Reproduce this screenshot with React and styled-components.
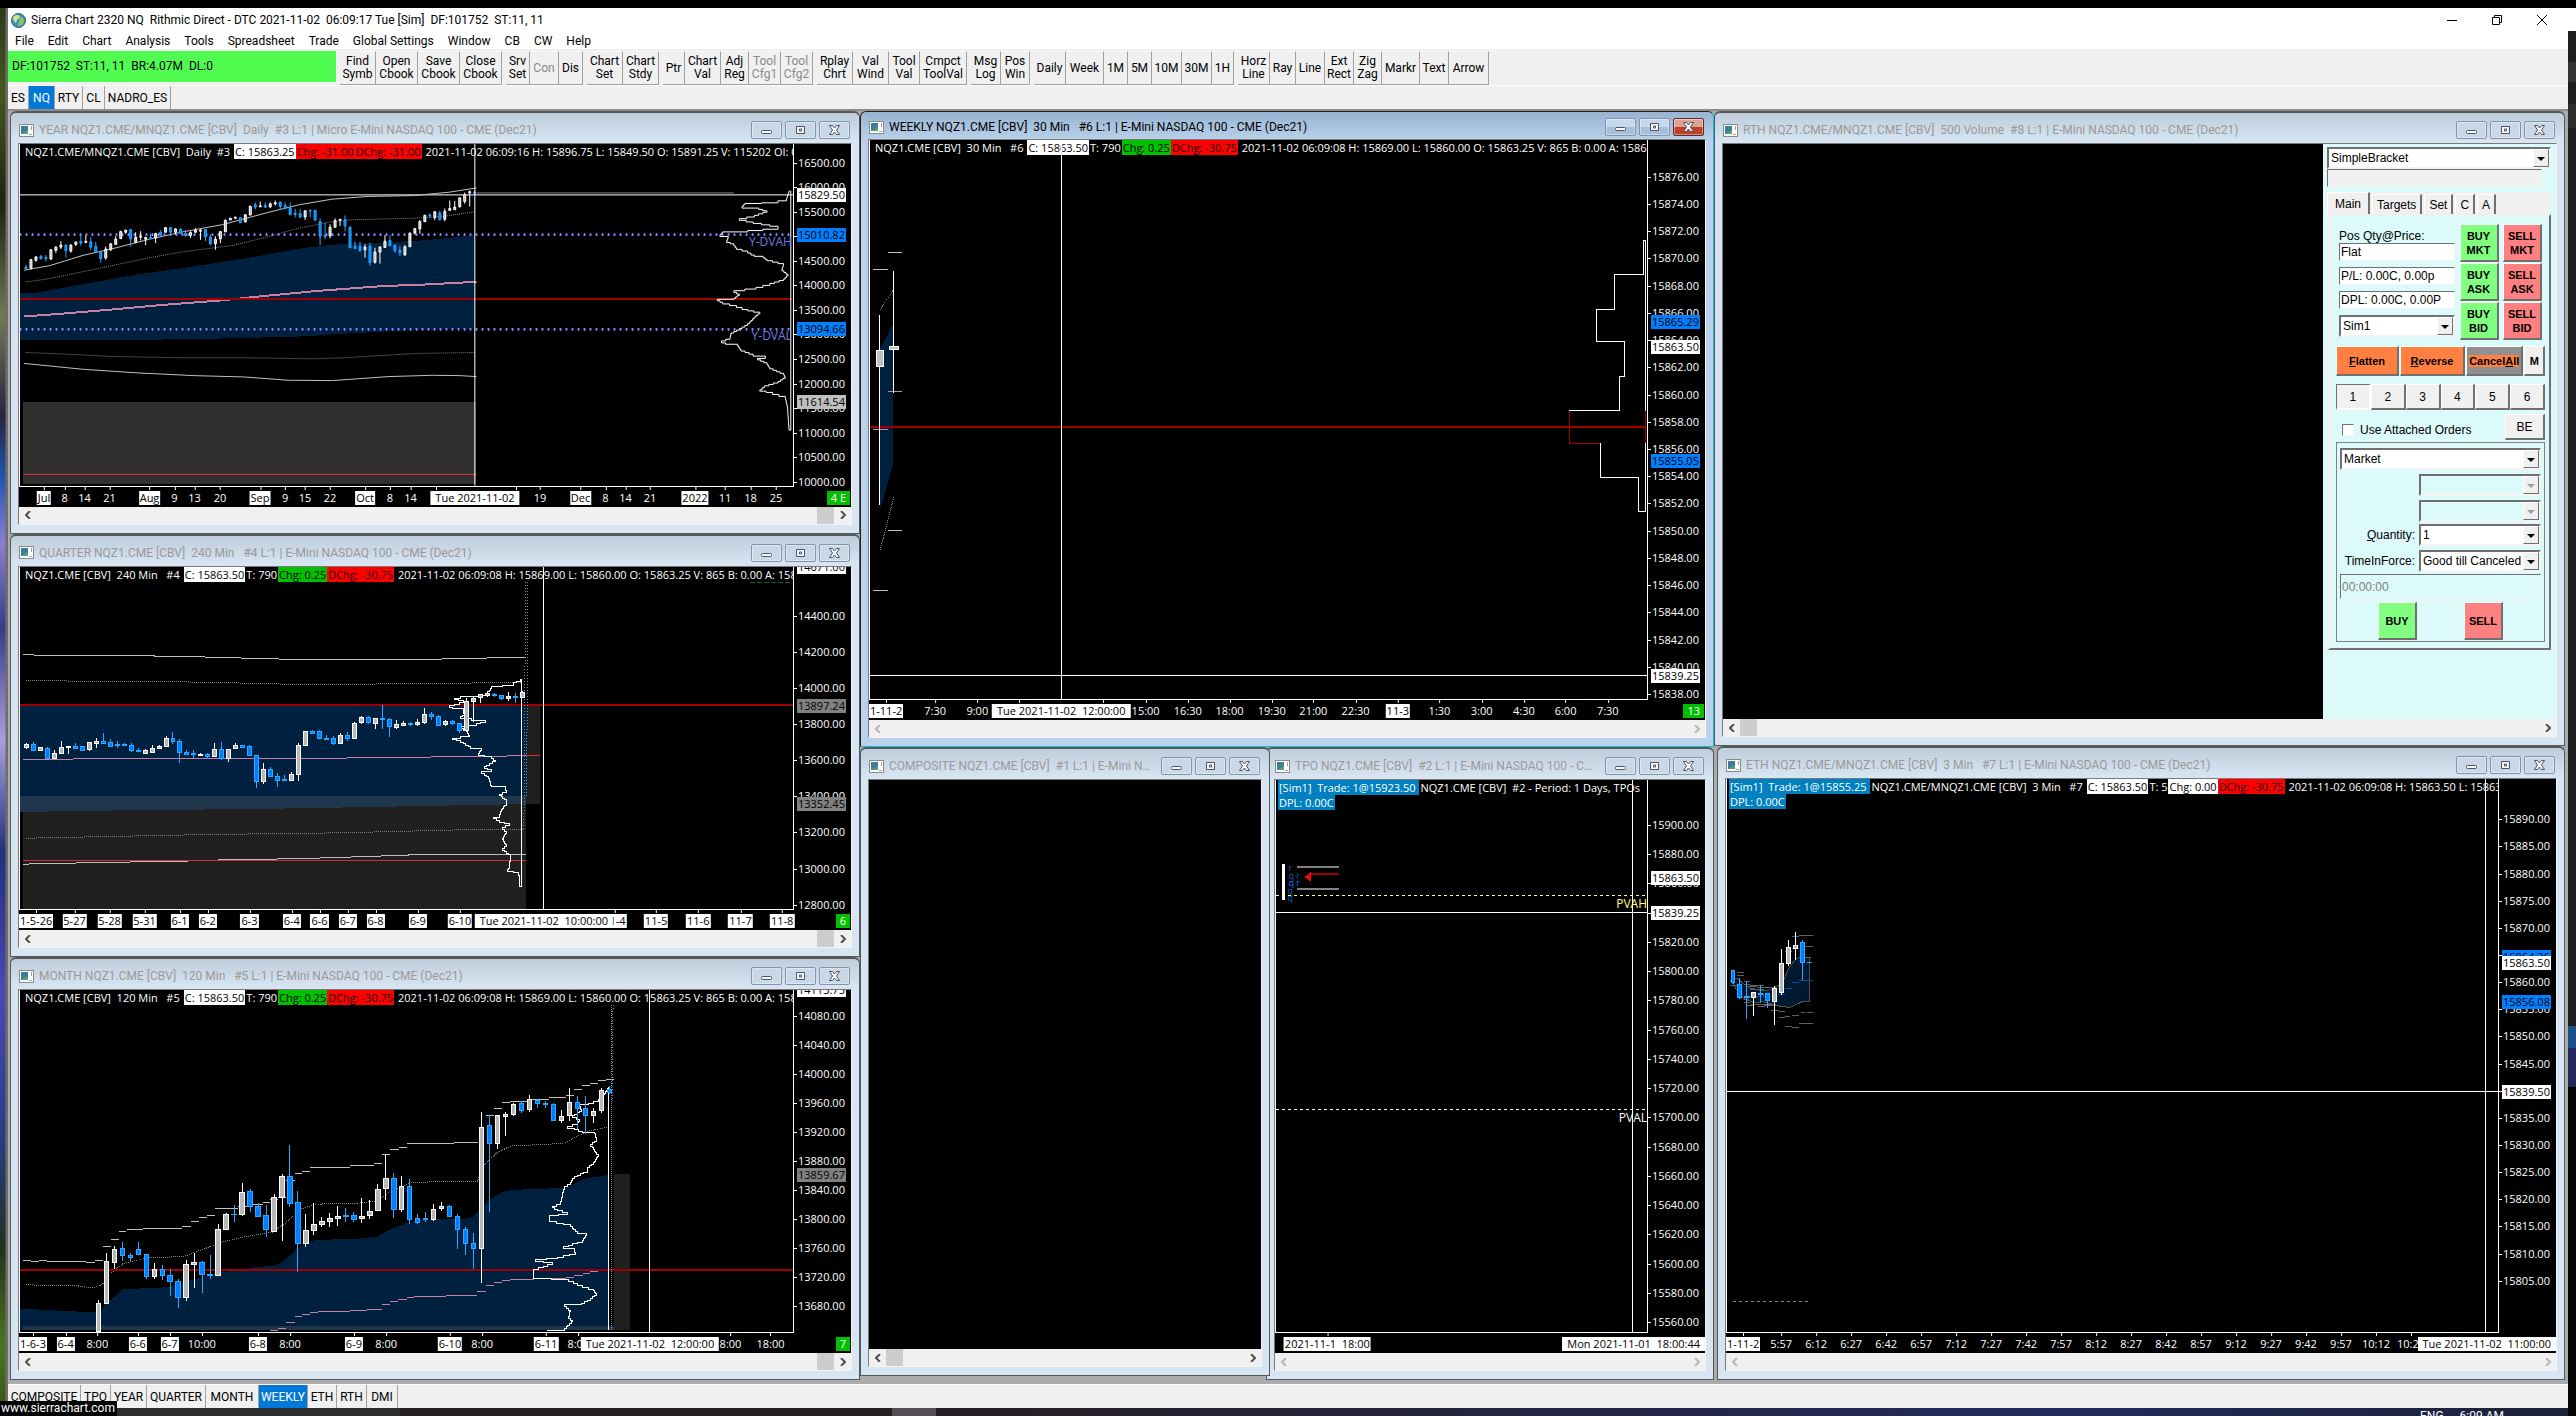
import React from 'react';
import styled, { createGlobalStyle, css } from 'styled-components';

const uiFont = `Roboto, "Open Sans", sans-serif`;
const chartFont = `"Open Sans", "Noto Sans", sans-serif`;
const panelFont = `"Liberation Sans", Arial, sans-serif`;

const GlobalStyle = createGlobalStyle`
    * { box-sizing: border-box; }
    body { margin: 0; background: #000; font-family: ${uiFont}; font-size: 12px; }
    button, input, select { font: inherit; color: inherit; margin: 0; border-radius: 0; }
`;

/* ---------- desktop and application shell ---------- */

const Desktop = styled.div`
    height: 100vh;
    min-height: 900px;
    display: grid;
    grid-template-columns: 8px minmax(0, 1fr) 8px;
    grid-template-rows: 8px minmax(0, 1fr) 8px;
    background: #000;
    line-height: 16px;
    color: #000;
    overflow: hidden;
`;

const Wallpaper = styled.div`
    grid-column: 1;
    grid-row: 2 / 4;
    background: linear-gradient(90deg, transparent 5px, #6d6d6d 6px),
        linear-gradient(#2c3a18 0, #46581e 6%, #1c2410 14%, #6f7a55 22%, #2a2340 29%, #1d52a8 33%, #8a7fd0 38%, #3a3a8c 44%, #a9a0dc 52%, #23307c 60%, #4a4ab4 70%, #2b3c86 80%, #1f3320 88%, #4d7420 95%, #33521a 100%);
`;

const SideApp = styled.div`
    grid-column: 3;
    grid-row: 2 / 4;
    background: linear-gradient(#fff 0 23px, #1e1e1e 23px 54px, #333 54px 74px, #1e1e1e 74px 96px, #2c2c2c 96px 120px, #1e1e1e 120px 1018px, #20508a 1018px 1040px, #26265c 1040px 1079px, #050505 1079px);
`;

const Taskbar = styled.div`
    grid-column: 2;
    grid-row: 3;
    display: flex;
    justify-content: flex-end;
    gap: 16px;
    padding-right: 64px;
    overflow: hidden;
    background: linear-gradient(90deg, #2d2d2d 0 392px, #261f24 392px 884px, #544f54 884px 928px, #261f24 928px, #222a5c 80%, #1c2238);
    color: #fff;
`;

const StatusTip = styled.div`
    position: fixed;
    left: 0;
    bottom: 0;
    height: 15px;
    padding: 0 2px 0 1px;
    background: #000;
    color: #fff;
    line-height: 14px;
`;

const Application = styled.div`
    grid-column: 2;
    grid-row: 2;
    display: flex;
    flex-direction: column;
    background: #f0f0f0;
`;

const AppTitle = styled.header`
    display: flex;
    align-items: center;
    gap: 5px;
    height: 24px;
    padding: 0 16px 0 3px;
    background: #fff;
    white-space: pre;
`;

const AppName = styled.h1`
    flex: 1;
    margin: 0;
    font-size: 12px;
    font-weight: 400;
`;

const AppControls = styled.div`
    display: flex;
    gap: 25px;
`;

const PlainButton = styled.button`
    display: flex;
    align-items: center;
    justify-content: center;
    padding: 0;
    border: 0;
    background: none;
`;

const MenuBar = styled.nav`
    display: flex;
    gap: 14px;
    height: 17px;
    padding-left: 7px;
    background: #fff;
`;

const Toolbar = styled.div`
    display: flex;
    gap: 4px;
    height: 36px;
    padding-top: 2px;
`;

const Connection = styled.div`
    width: 328px;
    height: 31px;
    padding-left: 4px;
    background: #50fc50;
    line-height: 31px;
    white-space: pre;
`;

const ToolGroup = styled.div`
    display: flex;
`;

const ToolButton = styled.button`
    width: ${p => p.$w}px;
    height: 34px;
    padding: 0;
    border: solid;
    border-width: 1px 1px 1px 0;
    border-color: #a0a0a0;
    border-top-color: #f8f8f8;
    background: #f0f0f0;
    line-height: 13px;
    white-space: pre-line;
    color: ${p => (p.disabled ? '#8a8a8a' : '#000')};
`;

const TabStrip = styled.div`
    display: flex;
    height: 24px;
    border-top: 1px solid #fff;
`;

const StripTab = styled.button`
    width: ${p => p.$w}px;
    padding: 0;
    border: 0;
    border-right: 1px solid #a0a0a0;
    background: ${p => (p.$on ? '#0078d7' : '#f0f0f0')};
    color: ${p => (p.$on ? '#fff' : '#000')};
    white-space: nowrap;
`;

const Workspace = styled.main`
    flex: 1;
    min-height: 0;
    display: grid;
    grid-template-columns: minmax(0, 850fr) minmax(0, 854fr) minmax(0, 851fr);
    padding: 0 3px 4px 2px;
    border-top: 2px solid #8c8c8c;
    background: #ababab;
`;

const Column = styled.div`
    display: grid;
    grid-template-rows: ${p => p.$rows};
    min-height: 0;
`;

const Split = styled.div`
    display: grid;
    grid-template-columns: minmax(0, 410fr) minmax(0, 444fr);
    min-height: 0;
`;

/* ---------- chart windows ---------- */

const Frame = styled.section`
    display: flex;
    flex-direction: column;
    min-width: 0;
    min-height: 0;
    padding: 0 7px 8px 7px;
    border: 1px solid #56595c;
    border-top-width: 2px;
    border-radius: 6px 6px 0 0;
    background: linear-gradient(#bfcddb 0, #d7e4f2 28px);
    color: #999;
    ${p => p.$active && css`
        border-color: #222;
        border-top-width: 1px;
        border-right-color: #18b8d8;
        border-bottom-color: #18b8d8;
        background: linear-gradient(#98b4d2 0, #b9d1ea 28px);
        color: #000;
    `}
    ${p => p.$place === 'short' && css`margin-bottom: 4px; position: relative; z-index: 1;`}
    ${p => p.$place === 'under' && css`margin-left: -4px;`}
    ${p => p.$place === 'inset' && css`margin-left: 3px;`}
`;

const TitleBar = styled.div`
    flex: none;
    display: flex;
    align-items: center;
    gap: 5px;
    height: ${p => (p.$active ? 27 : 30)}px;
    padding: ${p => (p.$active ? 3 : 4)}px 2px 0 1px;
`;

const Title = styled.h2`
    flex: 1;
    min-width: 0;
    margin: 0;
    overflow: hidden;
    text-overflow: ellipsis;
    white-space: pre;
    font-size: 12px;
    font-weight: 400;
`;

const Caption = styled.div`
    display: flex;
    gap: 3px;
`;

const CaptionButton = styled.button`
    display: flex;
    align-items: center;
    justify-content: center;
    width: 31px;
    height: 18px;
    padding: 0;
    border: 1px solid #8393ac;
    border-radius: 2px;
    background: ${p => (p.$active ? 'linear-gradient(#c6d8ec 50%, #a6c0dc 50%)' : '#c9d7e6')};
    box-shadow: inset 0 0 0 1px rgba(255, 255, 255, 0.4);
    ${p => p.$close && css`
        border-color: #5c2a2a;
        background: linear-gradient(#e0a393 50%, #bd4029 50%);
    `}
`;

const Client = styled.div`
    flex: 1;
    min-height: 0;
    display: flex;
    flex-direction: column;
    border: 1px solid;
    border-color: #7a7a7a #f4f4f4 #f4f4f4 #7a7a7a;
    background: #000;
`;

const ScrollTrack = styled.div`
    flex: none;
    display: flex;
    justify-content: space-between;
    height: 17px;
    background: #f0f0f0;
    color: ${p => (p.$off ? '#b8b8b8' : '#505050')};
`;

const ScrollArrow = styled(PlainButton)`
    width: 17px;
`;

const ScrollThumb = styled.div`
    width: 17px;
    background: #cdcdcd;
    margin-left: ${p => (p.$end ? 'auto' : '0')};
    margin-right: ${p => (p.$end ? '0' : 'auto')};
`;

const ChartGrid = styled.div`
    flex: 1;
    min-height: 0;
    display: grid;
    grid-template-columns: minmax(0, 1fr) 57px;
    grid-template-rows: minmax(0, 1fr) 20px;
    overflow: hidden;
    color: #fff;
    font-family: ${chartFont};
    font-size: 11px;
    line-height: 14px;
    white-space: pre;
`;

const Plot = styled.div`
    position: relative;
    overflow: hidden;
    border: solid #fff;
    border-width: 0 1px 1px 1px;
`;

const PlotDrawing = styled.svg`
    display: block;
    position: absolute;
    inset: 0;
    width: 100%;
    height: 100%;
    fill: none;
    shape-rendering: crispEdges;
    & * { vector-effect: non-scaling-stroke; }
`;

const Readout = styled.div`
    position: absolute;
    top: 0;
    left: ${p => (p.$trade ? 2 : 4)}px;
    right: 0;
    overflow: hidden;
`;

const ReadoutRow = styled.div`
    display: flex;
    height: 15px;
`;

const Cell = styled.span`
    flex: none;
    padding: 0 1px;
    line-height: 15px;
    background: ${p => p.$bg || 'transparent'};
    color: ${p => p.$ink || '#fff'};
    ${p => p.$name && css`padding-right: 4px;`}
`;

const PlotLabel = styled.span`
    position: absolute;
    transform: translate(${p => (p.$right ? '-100%' : '-50%')}, -50%);
    font-size: ${p => (p.$small ? 9 : 12)}px;
    color: ${p => p.$ink};
`;

const PriceAxis = styled.div`
    position: relative;
    overflow: hidden;
`;

const Price = styled.span`
    position: absolute;
    left: 0;
    padding-left: 4px;
    transform: translateY(-50%);
    &::before {
        content: '';
        position: absolute;
        left: 0;
        top: 7px;
        width: 3px;
        height: 1px;
        background: #fff;
    }
`;

const PriceBadge = styled.span`
    position: absolute;
    left: 3px;
    padding: 0 1px;
    transform: translateY(-50%);
    background: ${p => p.$bg};
    color: #000;
`;

const TimeAxis = styled.div`
    grid-column: 1 / -1;
    position: relative;
    overflow: hidden;
`;

const Time = styled.span`
    position: absolute;
    top: 4px;
    padding: 0 1px;
    transform: translateX(-50%);
    ${p => p.$boxed && css`background: #fff; color: #000;`}
    ${p => !p.$wide && css`
        &::before {
            content: '';
            position: absolute;
            left: 50%;
            top: -4px;
            width: 1px;
            height: 3px;
            background: #fff;
        }
    `}
    ${p => p.$wide && css`padding: 0 5px;`}
    ${p => p.$flush && css`left: 0; transform: none;`}
    ${p => p.$end && css`left: auto; right: 0; transform: none;`}
`;

const Corner = styled.span`
    position: absolute;
    top: 4px;
    right: 1px;
    padding: 0 4px;
    background: #00c000;
    color: #fff;
`;

const WindowIcon = () => (
    <svg width="15" height="13" viewBox="0 0 15 13">
        <rect x="0.5" y="0.5" width="14" height="12" fill="#fff" stroke="#8a8a8a" />
        <rect x="2" y="2" width="7" height="8" fill="#3d7f9a" />
        <path d="M2 10L9 6V10Z" fill="#5aa06a" />
        <path d="M12.5 2V6M10 10.5H13" stroke="#a0a0a0" />
    </svg>
);

const glyphs = {
    Minimize: <rect x="1.5" y="6.5" width="10" height="3" rx="1" />,
    Restore: <path d="M2.5 2.5H10.5V9.5H2.5ZM5.5 5H7.5V7H5.5Z" />,
    Close: <path d="M1.5 1.5H4.5L6.5 4L8.5 1.5H11.5L8.5 6L11.5 10.5H8.5L6.5 8L4.5 10.5H1.5L4.5 6Z" />,
};

function ChildWindow({ title, active, place, children }) {
    return (
        <Frame $active={active} $place={place} aria-label={title}>
            <TitleBar $active={active}>
                <WindowIcon />
                <Title>{title}</Title>
                <Caption>
                    {Object.keys(glyphs).map(name => (
                        <CaptionButton key={name} aria-label={name} $active={active} $close={active && name === 'Close'}>
                            <svg width="13" height="12" viewBox="0 0 13 12" fill="#f6f8fa" stroke="#4c5566" strokeWidth="1">
                                {glyphs[name]}
                            </svg>
                        </CaptionButton>
                    ))}
                </Caption>
            </TitleBar>
            <Client>{children}</Client>
        </Frame>
    );
}

function Scrollbar({ thumb }) {
    return (
        <ScrollTrack $off={!thumb}>
            <ScrollArrow aria-label="Scroll left">
                <svg width="6" height="8" fill="none" stroke="currentColor" strokeWidth="2"><path d="M5 0L1 4L5 8" /></svg>
            </ScrollArrow>
            {thumb && <ScrollThumb $end={thumb === 'end'} />}
            <ScrollArrow aria-label="Scroll right">
                <svg width="6" height="8" fill="none" stroke="currentColor" strokeWidth="2"><path d="M1 0L5 4L1 8" /></svg>
            </ScrollArrow>
        </ScrollTrack>
    );
}

// box: [left, plot right, axis right, top, bottom] in drawing units
function Chart({ box, readout, trade, prices, badges = [], times, corner, labels = [], thumb, children }) {
    const [x0, x1, xEnd, y0, y1] = box;
    const px = x => `${((x - x0) / (x1 - x0)) * 100}%`;
    const py = y => `${((y - y0) / (y1 - y0)) * 100}%`;
    const tx = x => `${((x - x0) / (xEnd - x0)) * 100}%`;
    const { from, step, count, at, gap } = prices;
    const scale = Array.from({ length: count }, (_, i) => ({ v: from - i * step, y: at + i * gap }));

    return (
        <>
            <ChartGrid>
                <Plot>
                    <Readout $trade={trade}>
                        <ReadoutRow>
                            {trade && <Cell $bg="#0080c0">{trade}</Cell>}
                            {readout.map(([text, bg, ink], i) => <Cell key={text} $name={i === 0} $bg={bg} $ink={ink}>{text}</Cell>)}
                        </ReadoutRow>
                        {trade && <ReadoutRow><Cell $bg="#0080c0">DPL: 0.00C</Cell></ReadoutRow>}
                    </Readout>
                    <PlotDrawing viewBox={`${x0} ${y0} ${x1 - x0} ${y1 - y0}`} preserveAspectRatio="none">{children}</PlotDrawing>
                    {labels.map((l, i) => (
                        <PlotLabel key={i} $ink={l.ink} $right={l.right} $small={l.small} style={{ left: px(l.x), top: py(l.y) }}>{l.text}</PlotLabel>
                    ))}
                </Plot>
                <PriceAxis>
                    {scale.map(s => <Price key={s.v} style={{ top: py(s.y) }}>{s.v.toFixed(2)}</Price>)}
                    {badges.map(([text, y, bg]) => <PriceBadge key={text} $bg={bg} style={{ top: py(y) }}>{text}</PriceBadge>)}
                </PriceAxis>
                <TimeAxis>
                    {times.map(([text, x, kind]) => (
                        <Time
                            key={text + x}
                            $boxed={!!kind}
                            $wide={kind === 'cursor' || kind === 'cursorEnd'}
                            $flush={kind === 'first'}
                            $end={kind === 'cursorEnd'}
                            style={kind === 'first' || kind === 'cursorEnd' ? undefined : { left: tx(x) }}
                        >
                            {text}
                        </Time>
                    ))}
                    {corner && <Corner>{corner}</Corner>}
                </TimeAxis>
            </ChartGrid>
            <Scrollbar thumb={thumb} />
        </>
    );
}

// bars: [high, low, bodyTop, bodyBottom, up]
function Candles({ bars, x, step, half, dy = 0 }) {
    return bars.map(([high, low, top, bottom, up], i) => {
        const cx = x + i * step;
        return (
            <g key={i} stroke={up ? '#fff' : '#28a8ff'}>
                <path d={`M${cx} ${high + dy}V${low + dy}`} />
                <rect x={cx - half} y={top + dy} width={half * 2} height={Math.max(bottom - top, 2)} fill={up ? '#b8b8b8' : '#0080ff'} />
            </g>
        );
    });
}

// ragged volume outline: every leg is broken up in small stairs
const stairs = (points, size = 5) => {
    let d = `M${points[0][0]} ${points[0][1]}`;
    for (let i = 1; i < points.length; i++) {
        const [ax, ay] = points[i - 1];
        const [bx, by] = points[i];
        const n = Math.max(1, Math.round(Math.abs(by - ay) / size));
        for (let k = 1; k <= n; k++) {
            d += `V${ay + ((by - ay) * k) / n}H${ax + ((bx - ax) * k) / n}`;
        }
    }
    return d;
};

const dashes = rows => rows.map(([a, b, y]) => `M${a} ${y}H${b}`).join('');

const quote = name => [
    [name],
    ['C: 15863.50', '#fff', '#000'],
    ['T: 790'],
    ['Chg: 0.25', '#00c000', '#000'],
    ['DChg: -30.75', '#f00', '#200000'],
    [' 2021-11-02 06:09:08 H: 15869.00 L: 15860.00 O: 15863.25 V: 865 B: 0.00 A: 15863.50'],
];

/* ---------- chart data ---------- */

const yearBars = [
    [252, 264, 258, 263, 0], [234, 266, 236, 262, 1], [225, 242, 228, 238, 1], [222, 235, 226, 233, 0], [222, 242, 229, 233, 0],
    [204, 237, 206, 234, 1], [195, 216, 198, 208, 1], [180, 204, 192, 198, 1], [190, 230, 192, 209, 0], [189, 215, 192, 210, 1],
    [181, 195, 183, 190, 1], [162, 194, 181, 186, 0], [163, 186, 181, 184, 1], [168, 207, 182, 198, 0], [183, 215, 196, 214, 0],
    [210, 245, 213, 233, 0], [196, 236, 204, 231, 1], [186, 210, 188, 206, 1], [165, 192, 174, 190, 1], [148, 174, 151, 172, 1],
    [145, 158, 147, 153, 1], [143, 197, 145, 173, 0], [153, 186, 168, 184, 1], [150, 178, 165, 168, 1], [166, 192, 169, 174, 1],
    [156, 174, 169, 172, 0], [155, 186, 157, 170, 1], [147, 165, 153, 162, 0], [139, 155, 139, 153, 1], [139, 160, 139, 153, 0],
    [141, 160, 143, 153, 1], [141, 158, 144, 157, 0], [147, 166, 157, 163, 0], [150, 171, 154, 163, 1], [141, 156, 147, 153, 1],
    [143, 176, 147, 150, 1], [145, 180, 145, 167, 0], [160, 192, 168, 188, 0], [165, 206, 174, 188, 1], [151, 186, 151, 173, 1],
    [114, 152, 117, 152, 1], [109, 116, 111, 116, 1], [105, 112, 108, 111, 1], [109, 124, 109, 124, 0], [100, 122, 100, 122, 1],
    [72, 101, 75, 101, 1], [63, 84, 70, 77, 0], [60, 76, 73, 76, 1], [63, 80, 72, 77, 0], [63, 80, 67, 76, 1],
    [57, 72, 64, 67, 1], [60, 86, 62, 75, 0], [63, 82, 72, 82, 0], [63, 100, 79, 100, 0], [82, 108, 96, 99, 0],
    [84, 110, 97, 107, 0], [88, 116, 88, 107, 1], [84, 108, 87, 89, 0], [85, 120, 87, 116, 0], [111, 192, 121, 165, 0],
    [124, 174, 162, 166, 0], [129, 171, 138, 164, 1], [111, 138, 118, 138, 1], [114, 134, 114, 117, 1], [102, 150, 115, 134, 0],
    [135, 200, 138, 200, 0], [181, 204, 195, 202, 0], [182, 213, 196, 208, 0], [190, 230, 198, 206, 1], [186, 254, 195, 245, 0],
    [200, 248, 213, 244, 1], [195, 248, 198, 213, 1], [162, 199, 180, 199, 1], [163, 194, 178, 194, 0], [190, 216, 192, 209, 0],
    [195, 225, 207, 215, 0], [192, 224, 197, 222, 1], [153, 197, 156, 197, 1], [142, 160, 142, 156, 1], [116, 158, 121, 143, 1],
    [100, 121, 102, 121, 1], [96, 111, 101, 104, 0], [90, 117, 91, 109, 1], [88, 118, 95, 115, 0], [81, 120, 90, 114, 1],
    [57, 87, 81, 87, 1], [58, 85, 77, 85, 1], [49, 78, 49, 76, 1], [33, 67, 40, 60, 1], [27, 75, 30, 34, 1], [27, 38, 31, 35, 0],
];

const yearVolume = [
    [1425, 237], [1420, 262], [1405, 268], [1375, 274], [1345, 276], [1340, 284], [1370, 290], [1385, 298], [1362, 312], [1335, 322],
    [1360, 332], [1405, 345], [1405, 350], [1350, 358], [1305, 362], [1300, 370], [1315, 376], [1312, 390], [1325, 398], [1330, 410],
    [1350, 420], [1362, 432], [1378, 436], [1385, 445], [1415, 458], [1412, 475], [1423, 490], [1415, 505], [1390, 518], [1365, 530],
    [1325, 540], [1335, 550], [1325, 563], [1295, 566], [1305, 575], [1330, 585], [1350, 597], [1372, 605], [1365, 615], [1350, 640],
    [1335, 655], [1320, 668], [1318, 682], [1303, 692], [1310, 698], [1332, 702], [1338, 718], [1360, 732], [1382, 738], [1368, 745],
    [1385, 758], [1390, 772], [1415, 790], [1418, 800], [1405, 815], [1380, 828], [1372, 840], [1395, 848], [1418, 860], [1422, 890],
    [1425, 962], [1428, 962],
];

const quarterBars = [
    [638, 657, 642, 653, 1], [636, 664, 642, 662, 0], [650, 664, 652, 662, 1], [650, 688, 655, 686, 0], [660, 686, 671, 684, 1],
    [634, 673, 651, 671, 1], [649, 672, 649, 652, 1], [640, 656, 649, 654, 0], [648, 660, 650, 660, 0], [636, 662, 638, 658, 1],
    [624, 655, 634, 640, 1], [608, 640, 634, 640, 0], [625, 652, 638, 650, 0], [632, 655, 642, 646, 0], [640, 648, 642, 645, 0],
    [640, 665, 645, 662, 0], [655, 665, 660, 663, 0], [657, 672, 660, 670, 1], [644, 668, 654, 668, 1], [645, 656, 650, 654, 1],
    [618, 650, 624, 650, 1], [606, 642, 626, 634, 0], [628, 700, 633, 668, 0], [660, 675, 668, 672, 0], [660, 685, 670, 674, 0],
    [668, 678, 672, 675, 1], [669, 688, 674, 680, 0], [640, 682, 657, 680, 1], [636, 690, 657, 686, 0], [657, 695, 657, 686, 1],
    [640, 658, 645, 655, 1], [645, 654, 646, 651, 0], [645, 678, 648, 676, 0], [676, 773, 676, 755, 0], [700, 762, 717, 755, 1],
    [710, 740, 717, 738, 0], [730, 770, 738, 751, 0], [735, 754, 748, 752, 0], [727, 753, 733, 751, 1], [640, 752, 647, 733, 1],
    [603, 648, 605, 646, 1], [598, 612, 603, 610, 0], [598, 628, 604, 626, 0], [615, 628, 624, 627, 0], [616, 646, 624, 640, 0],
    [608, 642, 615, 640, 1], [606, 633, 615, 626, 0], [575, 628, 579, 626, 1], [556, 580, 562, 578, 1], [558, 580, 561, 578, 0],
    [563, 595, 565, 580, 1], [525, 597, 565, 569, 0], [562, 620, 567, 590, 0], [570, 595, 584, 593, 1], [572, 588, 580, 586, 1],
    [576, 586, 580, 584, 0], [565, 586, 578, 584, 1], [534, 580, 553, 577, 1], [546, 568, 552, 559, 0], [554, 588, 558, 586, 0],
    [570, 588, 573, 584, 1], [568, 584, 573, 580, 0], [578, 608, 580, 601, 0], [502, 605, 514, 601, 1], [500, 575, 504, 515, 1],
    [490, 517, 494, 503, 1], [486, 500, 490, 495, 1], [488, 500, 492, 497, 0], [495, 508, 497, 506, 0], [484, 512, 499, 506, 1],
    [489, 519, 498, 502, 0], [482, 504, 487, 502, 1],
];

const quarterVolume = [
    [938, 447], [925, 458], [905, 465], [885, 470], [882, 480], [875, 490], [862, 496], [830, 500], [818, 504], [835, 512], [828, 518],
    [810, 526], [815, 532], [835, 534], [836, 550], [830, 560], [850, 566], [875, 572], [858, 580], [830, 590], [840, 600], [845, 615],
    [815, 624], [830, 632], [848, 650], [868, 655], [862, 670], [885, 680], [892, 690], [882, 700], [872, 710], [885, 718], [868, 725],
    [880, 740], [885, 765], [910, 770], [912, 780], [900, 792], [912, 810], [912, 822], [905, 835], [900, 855], [890, 862], [900, 872],
    [918, 882], [905, 893], [912, 905], [905, 925], [912, 945], [905, 957], [920, 975], [918, 1010], [915, 1020], [935, 1028],
    [936, 1070], [941, 1070],
];

const monthBars = [
    [1053, 1150, 1066, 1150, 1], [912, 1066, 939, 1066, 1], [892, 960, 901, 940, 1], [880, 938, 900, 920, 0], [912, 938, 919, 925, 0],
    [880, 918, 903, 917, 0], [915, 990, 918, 984, 0], [942, 990, 963, 985, 1], [950, 995, 961, 982, 0], [962, 1042, 981, 999, 0],
    [990, 1080, 1000, 1048, 0], [935, 1058, 948, 1048, 1], [912, 1018, 942, 948, 1], [938, 1034, 942, 976, 0], [920, 990, 976, 980, 0],
    [826, 982, 842, 980, 1], [792, 844, 795, 842, 1], [768, 820, 795, 797, 0], [702, 800, 730, 796, 1], [718, 788, 728, 773, 0],
    [762, 804, 772, 802, 0], [768, 864, 798, 842, 0], [735, 850, 745, 848, 1], [675, 875, 682, 745, 1], [588, 775, 682, 762, 0],
    [725, 971, 760, 884, 0], [795, 893, 845, 884, 1], [763, 858, 826, 845, 1], [804, 835, 817, 826, 1], [793, 835, 809, 818, 1],
    [772, 830, 802, 808, 1], [778, 820, 799, 803, 0], [790, 820, 799, 812, 0], [748, 822, 801, 810, 1], [754, 809, 786, 799, 1],
    [705, 786, 721, 784, 1], [618, 753, 688, 718, 1], [670, 806, 688, 782, 0], [680, 788, 713, 782, 1], [690, 825, 712, 812, 0],
    [796, 824, 808, 822, 0], [790, 818, 808, 812, 0], [765, 815, 780, 813, 1], [758, 787, 772, 778, 1], [768, 803, 772, 801, 0],
    [796, 902, 802, 842, 0], [835, 920, 843, 884, 0], [852, 962, 885, 900, 0], [486, 1004, 533, 900, 1], [495, 788, 529, 583, 0],
    [498, 598, 499, 583, 1], [486, 560, 496, 500, 1], [460, 500, 466, 496, 1], [455, 490, 462, 482, 0], [435, 488, 450, 480, 1],
    [448, 474, 452, 462, 0], [455, 476, 460, 465, 0], [460, 514, 463, 512, 0], [480, 520, 500, 512, 1], [415, 515, 459, 499, 1],
    [440, 538, 459, 478, 0], [440, 553, 478, 499, 0], [475, 520, 485, 499, 1], [415, 490, 421, 484, 1], [410, 432, 418, 427, 0],
];

const monthVolume = [
    [1097, 412], [1090, 430], [1078, 448], [1060, 460], [1045, 465], [1048, 480], [1032, 498], [1045, 510], [1040, 520], [1022, 531],
    [1035, 536], [1050, 545], [1072, 548], [1075, 570], [1065, 585], [1072, 600], [1078, 615], [1070, 640], [1058, 655], [1058, 665],
    [1035, 683], [1028, 700], [1018, 712], [1012, 745], [1010, 762], [995, 772], [1005, 780], [1022, 790], [990, 800], [990, 812],
    [1028, 828], [1040, 848], [1057, 855], [1050, 875], [1015, 893], [1035, 900], [1037, 912], [1005, 925], [965, 933], [995, 942],
    [980, 952], [962, 962], [962, 985], [1025, 993], [1050, 1010], [1070, 1022], [1075, 1035], [1065, 1050], [1042, 1068], [1018, 1068],
    [1028, 1085], [1025, 1105], [1032, 1115], [1018, 1140], [985, 1146],
];

const monthUpper = [
    [40, 54, 934], [54, 68, 937], [68, 82, 935], [82, 154, 937], [154, 170, 940], [170, 183, 935], [183, 198, 892], [198, 212, 871],
    [212, 226, 847], [228, 256, 841], [256, 326, 838], [326, 342, 832], [342, 357, 817], [357, 371, 805], [371, 386, 800], [386, 428, 778],
    [428, 444, 771], [444, 472, 765], [472, 486, 759], [486, 500, 752], [500, 514, 745], [514, 530, 695], [530, 544, 674], [544, 558, 668],
    [558, 630, 655], [630, 674, 650], [674, 688, 643], [688, 703, 616], [703, 718, 601], [718, 732, 593], [732, 818, 583], [818, 862, 580],
    [876, 890, 498], [890, 905, 478], [905, 919, 457], [919, 950, 455], [950, 990, 448], [990, 1020, 443], [1020, 1035, 437],
    [1035, 1049, 420], [1049, 1063, 407], [1063, 1078, 400], [1078, 1092, 391], [1092, 1107, 388],
];

const monthMean = [
    [486, 500, 1147], [500, 514, 1141], [514, 530, 1121], [530, 544, 1105], [544, 558, 1098], [558, 572, 1091], [572, 630, 1089],
    [630, 660, 1087], [660, 688, 1084], [688, 703, 1069], [703, 717, 1060], [717, 732, 1054], [732, 746, 1048], [746, 804, 1045],
    [804, 860, 1042], [860, 875, 1030], [875, 890, 1012], [890, 905, 1002], [905, 919, 996], [919, 962, 994], [962, 1020, 990],
    [1020, 1034, 988], [1034, 1050, 981], [1050, 1063, 973], [1063, 1078, 969], [1078, 1100, 965],
];

const ethBars = [
    [154, 195, 154, 192, 0], [178, 242, 199, 236, 0], [187, 302, 235, 238, 0], [220, 293, 223, 238, 1], [198, 254, 226, 228, 0],
    [222, 268, 226, 247, 0], [202, 320, 211, 249, 1], [90, 230, 133, 223, 1], [63, 143, 85, 133, 1], [39, 122, 80, 88, 1],
    [63, 185, 70, 130, 0],
];

const ethBands = [
    [39, 60, 160], [39, 60, 171], [60, 80, 187], [60, 80, 199], [70, 100, 205], [80, 122, 202], [80, 122, 214], [100, 150, 208], [18, 40, 200],
    [60, 80, 253], [70, 88, 262], [82, 100, 257], [60, 75, 243], [100, 145, 258], [103, 125, 265], [120, 150, 262], [60, 90, 235], [143, 165, 276], [165, 186, 297],
    [165, 186, 280], [186, 207, 325], [207, 228, 328], [228, 270, 316], [186, 200, 295], [207, 228, 291], [232, 246, 283], [252, 270, 283],
    [186, 205, 99], [207, 228, 52], [228, 270, 49], [207, 228, 90], [246, 270, 82], [228, 262, 115],
];

const tools = [
    [['Find\nSymb', 36], ['Open\nCbook', 42], ['Save\nCbook', 42], ['Close\nCbook', 42]],
    [['Srv\nSet', 24], ['Con', 29, true], ['Dis', 24]],
    [['Chart\nSet', 36], ['Chart\nStdy', 36]],
    [['Ptr', 22], ['Chart\nVal', 36], ['Adj\nReg', 28], ['Tool\nCfg1', 32, true], ['Tool\nCfg2', 32, true]],
    [['Rplay\nChrt', 36], ['Val\nWind', 36], ['Tool\nVal', 31], ['Cmpct\nToolVal', 47]],
    [['Msg\nLog', 30], ['Pos\nWin', 29]],
    [['Daily', 32], ['Week', 38], ['1M', 24], ['5M', 24], ['10M', 30], ['30M', 30], ['1H', 22]],
    [['Horz\nLine', 32], ['Ray', 26], ['Line', 29], ['Ext\nRect', 29], ['Zig\nZag', 28], ['Markr', 38], ['Text', 29], ['Arrow', 40]],
];

const menus = ['File', 'Edit', 'Chart', 'Analysis', 'Tools', 'Spreadsheet', 'Trade', 'Global Settings', 'Window', 'CB', 'CW', 'Help'];
const symbolTabs = [['ES', 21], ['NQ', 26], ['RTY', 28], ['CL', 22], ['NADRO_ES', 66]];
const chartTabs = [['COMPOSITE', 73], ['TPO', 30], ['YEAR', 36], ['QUARTER', 59], ['MONTH', 53], ['WEEKLY', 49], ['ETH', 29], ['RTH', 30], ['DMI', 31]];

/* ---------- charts ---------- */

const YearChart = () => (
    <Chart
        box={[35, 1432, 1533, 96, 1130]}
        thumb="end"
        corner="4 E"
        readout={[
            ['NQZ1.CME/MNQZ1.CME [CBV]  Daily  #3'],
            ['C: 15863.25', '#fff', '#000'],
            ['Chg: -31.00', '#f00', '#200000'],
            ['DChg: -31.00', '#f00', '#200000'],
            [' 2021-11-02 06:09:16 H: 15896.75 L: 15849.50 O: 15891.25 V: 115202 OI: 0'],
        ]}
        prices={{ from: 16500, step: 500, count: 14, at: 152, gap: 74.1 }}
        badges={[['15829.50', 249, '#fff'], ['15010.82', 371, '#0080ff'], ['13094.66', 654, '#0080ff'], ['11614.54', 874, '#c0c0c0']]}
        times={[
            ['Jul', 80, 1], ['8', 117], ['14', 153], ['21', 198], ['Aug', 270, 1], ['9', 315], ['13', 351], ['20', 397], ['Sep', 469, 1],
            ['9', 514], ['15', 550], ['22', 595], ['Oct', 658, 1], ['8', 703], ['14', 740], ['', 785], ['', 929], ['Tue 2021-11-02', 856, 'cursor'], ['19', 973],
            ['Dec', 1046, 1], ['8', 1091], ['14', 1127], ['21', 1171], ['2022', 1252, 1], ['11', 1306], ['18', 1352], ['25', 1398],
        ]}
        labels={[{ text: 'Y-DVAH', x: 1430, y: 392, ink: '#7878e0', right: true }, { text: 'Y-DVAL', x: 1430, y: 678, ink: '#7878e0', right: true }]}
    >
        <path fill="#002040" d="M35 548L60 547L150 520L250 490L350 466L450 440L550 410L620 398L700 394L760 388L800 382L858 372V657L800 657L720 661L620 670L550 678L420 684L250 689L35 690Z" />
        <rect x="41" y="876" width="819" height="250" fill="#303030" />
        <path stroke="#e83040" d="M41 1096H860" />
        <path stroke="#fff" d="M35 250H1432" />
        <path stroke="#808080" d="M860 244H1325" />
        <path stroke="#c0c0c0" d="M42 478L89 464L149 433L209 410L269 384L329 362L401 340L479 305L539 280L599 263L660 255L750 252L771 248L810 242L860 229" />
        <path stroke="#808080" strokeDasharray="1 1" d="M45 514L90 503L150 482L210 461L270 440L330 422L420 403L480 378L540 350L600 331L640 325L740 321L800 315L857 301" />
        <path stroke="#808080" strokeDasharray="1 1" d="M45 727L120 732L200 739L330 743L450 743L560 746L620 743L700 735L750 730L857 727" />
        <path stroke="#c0c0c0" d="M42 760L150 778L250 789L350 797L440 801L520 811L600 812L700 800L780 796L830 797L860 800" />
        <path stroke="#c880a0" strokeWidth="2" d="M42 618L100 611L200 597L300 582L395 570L470 557L570 541L690 526L770 521L860 513" />
        <path stroke="#a00000" strokeWidth="2" d="M35 566H1430" />
        {[371, 656].map(y => (
            <g key={y} stroke="#8080ff">
                <path strokeWidth="3" strokeDasharray="1 5" d={`M35 ${y}H1432`} />
                <path strokeDasharray="3 3" strokeDashoffset="1" d={`M35 ${y}H1432`} />
            </g>
        ))}
        <Candles bars={yearBars} x={45.8} step={9.01} half={1.8} dy={210} />
        <path stroke="#fff" d={stairs(yearVolume)} />
        <path stroke="#fff" d="M1428 237V962M857 96V1130" />
    </Chart>
);

const QuarterChart = () => (
    <Chart
        box={[34, 1430, 1532, 109, 1140]}
        thumb="end"
        corner="6"
        readout={quote('NQZ1.CME [CBV]  240 Min   #4')}
        prices={{ from: 14400, step: 200, count: 9, at: 256, gap: 108.4 }}
        badges={[['14671.00', 110, '#fff'], ['13897.24', 526, '#808080'], ['13352.45', 821, '#808080']]}
        times={[
            ['1-5-26', 34, 'first'], ['5-27', 134, 1], ['5-28', 197, 1], ['5-31', 260, 1], ['6-1', 323, 1], ['6-2', 374, 1], ['6-3', 449, 1],
            ['6-4', 525, 1], ['6-6', 575, 1], ['6-7', 626, 1], ['6-8', 676, 1], ['6-9', 752, 1], ['6-10', 828, 1], ['11-4', 1106, 1],
            ['Tue 2021-11-02  10:00:00', 979, 'cursor'], ['11-5', 1181, 1], ['11-6', 1257, 1], ['11-7', 1333, 1], ['11-8', 1408, 1],
        ]}
    >
        <rect x="40" y="798" width="908" height="340" fill="#202020" />
        <rect x="948" y="528" width="25" height="294" fill="#202020" />
        <path fill="#002040" d="M34 528H948V798H34Z" />
        <path fill="#20364c" d="M34 798H948V822L800 827L700 830L540 835L400 838L180 842L34 846Z" />
        <path stroke="#c0c0c0" d="M40 373L115 376L315 377L390 381L530 387H770L860 383L948 382" />
        <path stroke="#c0c0c0" d="M40 1003L180 998L330 994L420 989L530 987L680 979L720 976L820 973H948" />
        <path stroke="#808080" strokeDasharray="1 1" d="M45 451L340 455L460 459L540 463L680 461L850 458L940 456M45 925L190 920L400 913L540 911L680 906L850 899L945 898" />
        <path stroke="#d03030" d="M40 992H948M948 677H973" />
        <path stroke="#c880a0" d="M40 688L178 686L500 685L690 683L800 680L948 677" />
        <path stroke="#a00000" strokeWidth="2" d="M34 525H1430" />
        <path stroke="#006030" strokeDasharray="5 2" d="M1352 156H1427" />
        <path stroke="#7090b0" strokeDasharray="1 2" d="M947 153L944 900M951 153L949 798" />
        <path stroke="#fff" d={stairs(quarterVolume)} />
        <path stroke="#fff" d="M940 447V1070M979 109V1140" />
        <Candles bars={quarterBars} x={45.5} step={12.61} half={3.6} />
    </Chart>
);

const MonthChart = () => (
    <Chart
        box={[34, 1430, 1532, 119, 1150]}
        thumb="end"
        corner="7"
        readout={quote('NQZ1.CME [CBV]  120 Min   #5')}
        prices={{ from: 14080, step: 40, count: 11, at: 197, gap: 87.3 }}
        badges={[['14113.75', 118, '#fff'], ['13859.67', 674, '#808080']]}
        times={[
            ['1-6-3', 34, 'first'], ['6-4', 118, 1], ['8:00', 175], ['6-6', 248, 1], ['6-7', 305, 1], ['10:00', 363], ['6-8', 464, 1],
            ['8:00', 522], ['6-9', 637, 1], ['8:00', 695], ['6-10', 810, 1], ['8:00', 868], ['6-11', 983, 1], ['8:00', 1041],
            ['8:00', 1315], ['18:00', 1387], ['Tue 2021-11-02  12:00:00', 1170, 'cursor'],
        ]}
    >
        <path fill="#002040" d="M34 1080L100 1086L165 1092L178 1090L190 1062L205 1045L218 1022L300 1016L330 1000L400 970L445 958L495 950L510 938L530 905L550 882L570 873L640 870L680 863L700 843L735 820L765 812L850 808L868 775L885 750L905 728L925 722L1020 716L1055 688L1098 677V1146H34Z" />
        <rect x="40" y="1134" width="1067" height="12" fill="#20364c" />
        <rect x="1107" y="675" width="28" height="471" fill="#202020" />
        <path stroke="#c0c0c0" d={dashes(monthUpper)} />
        <path stroke="#808080" strokeDasharray="1 1" d="M45 1009L130 1010L165 1018L183 1008L190 985L220 945L260 928L330 923L350 910L400 880L435 865L490 850L515 820L540 780L570 765L640 763L680 755L700 730L740 700L800 697H860L870 650L895 610L920 590L1015 582L1060 545L1100 532" />
        <path stroke="#c880a0" d={dashes(monthMean)} />
        <path stroke="#a00000" strokeWidth="2" d="M34 963H1430" />
        <path stroke="#7090b0" strokeDasharray="1 1" d="M1102 163V1145" />
        <path stroke="#7090b0" strokeDasharray="1 2" d="M1105 163L1104 450" />
        <path stroke="#fff" d={stairs(monthVolume)} />
        <path stroke="#fff" d="M1097 412V1146M1170 119V1150" />
        <Candles bars={monthBars} x={175.5} step={14.42} half={4} />
    </Chart>
);

const WeeklyChart = () => (
    <Chart
        box={[35, 1437, 1540, 69, 1424]}
        corner="13"
        readout={quote('NQZ1.CME [CBV]  30 Min   #6')}
        prices={{ from: 15876, step: 2, count: 20, at: 158, gap: 65.8 }}
        badges={[['15865.29', 509, '#0080ff'], ['15863.50', 569, '#fff'], ['15855.05', 844, '#0080ff'], ['15839.25', 1365, '#fff']]}
        times={[
            ['1-11-2', 35, 'first'], ['7:30', 154], ['9:00', 230], ['Tue 2021-11-02  12:00:00', 381, 'cursor'], ['', 305], ['', 457], ['15:00', 533], ['16:30', 609],
            ['18:00', 684], ['19:30', 760], ['21:00', 835], ['22:30', 911], ['11-3', 987, 1], ['1:30', 1062], ['3:00', 1138], ['4:30', 1214],
            ['6:00', 1289], ['7:30', 1365],
        ]}
    >
        <path fill="#002040" d="M53 575L77 515V852L53 965Z" />
        <path stroke="#c0c0c0" d="M67 341H92M41 382H67M67 1014H92M41 1159H67" />
        <path stroke="#808080" strokeDasharray="1 1" d="M53 480L77 432M53 1062L78 935" />
        <path stroke="#a00000" strokeWidth="2" d="M35 765H1435" />
        <path stroke="#e08090" d="M67 679H92M41 771H67" />
        <path stroke="#fff" d="M53 492V952M78 387V682" />
        <path stroke="#fff" fill="#c0c0c0" d="M46 578H60V618H46ZM71 568H86V577H71Z" />
        <path stroke="#fff" d="M1353 804V886H1421V968H1434V312H1430V394H1378V479H1345V558H1396V642H1387V725H1297" />
        <path stroke="#a00000" d="M1297 725V804H1353M1435 725V804" />
        <path stroke="#fff" d="M381 69V1424M35 1366H1437" />
    </Chart>
);

const TpoChart = () => (
    <Chart
        box={[768, 1440, 1541, 93, 1379]}
        trade="[Sim1]  Trade: 1@15923.50 "
        readout={[['NQZ1.CME [CBV]  #2 - Period: 1 Days, TPOs']]}
        prices={{ from: 15900, step: 20, count: 18, at: 196, gap: 68.1 }}
        badges={[['15863.50', 320, '#fff'], ['15839.25', 401, '#fff']]}
        times={[['2021-11-1  18:00', 862, 1], ['Mon 2021-11-01  18:00:44', 1412, 'cursorEnd']]}
        labels={[
            { text: 'PVAH', x: 1440, y: 380, ink: '#ffff80', right: true },
            { text: 'PVAL', x: 1440, y: 879, ink: '#fff', right: true },
            { text: 'r', x: 794, y: 298, ink: '#0060c0', small: true },
            { text: 'q r', x: 801, y: 315, ink: '#0060c0', small: true },
            { text: 'q r', x: 801, y: 332, ink: '#0080ff', small: true },
            { text: 'q', x: 794, y: 350, ink: '#0060c0', small: true },
            { text: 'q', x: 794, y: 367, ink: '#0060c0', small: true },
        ]}
    >
        <path stroke="#fff" strokeWidth="3" d="M781 288V373" />
        <path stroke="#808080" strokeWidth="2" d="M806 297H883M806 348H883" />
        <path stroke="#a00000" strokeWidth="2" d="M830 313H883" />
        <path fill="#f00" d="M820 319L831 308V330Z" />
        <path stroke="#ffff80" strokeDasharray="3 3" d="M768 363H1440" />
        <path stroke="#fff" strokeDasharray="3 3" d="M768 861H1440" />
        <path stroke="#fff" d="M1414 93V1379M768 403H1440" />
    </Chart>
);

// every fifth 3-minute bar from 5:57 on
const quarterHours = Array.from({ length: 19 }, (_, i) => {
    const min = 357 + i * 15;
    return [`${Math.floor(min / 60)}:${min % 60}`, 131 + i * 63.4];
});

const EthChart = () => (
    <Chart
        box={[31, 1433, 1535, 90, 1381]}
        trade="[Sim1]  Trade: 1@15855.25 "
        readout={[
            ['NQZ1.CME/MNQZ1.CME [CBV]  3 Min   #7'],
            ['C: 15863.50', '#fff', '#000'],
            ['T: 5'],
            ['Chg: 0.00', '#fff', '#000'],
            ['DChg: -30.75', '#f00', '#200000'],
            [' 2021-11-02 06:09:08 H: 15863.50 L: 15863.25'],
        ]}
        prices={{ from: 15890, step: 5, count: 18, at: 183, gap: 63.3 }}
        badges={[['15864.26', 503, '#0080ff'], ['15863.50', 518, '#fff'], ['15856.08', 610, '#0080ff'], ['15839.50', 818, '#fff']]}
        times={[['1-11-2', 31, 'first'], ...quarterHours, ['Tue 2021-11-02  11:00:00', 1410, 'cursorEnd']]}
    >
        <g transform="translate(25 417.5) scale(0.604 0.773)">
            <path fill="#001830" stroke="#505050" d="M20 185L40 178L60 195L80 208L110 215L140 214L165 200L180 185L195 150L215 122L230 115H258V250H235L200 267L170 263L150 258L120 250L90 252L60 240L40 215Z" />
            <path stroke="#606060" d={dashes(ethBands)} />
            <path stroke="#0050a8" d="M98 235H122M165 229H186M186 211H207M207 190H228M228 184H270" />
            <Candles bars={ethBars} x={28} step={21} half={6} />
            <path stroke="#28a8ff" d="M104 227H120M62 237H78M252 130H267" />
        </g>
        <path stroke="#808080" strokeDasharray="3 3" d="M42 1311H178" />
        <path stroke="#fff" d="M1411 90V1381M31 820H1433" />
    </Chart>
);

/* ---------- trade panel ---------- */

const TradeView = styled.div`
    flex: 1;
    min-height: 0;
    display: flex;
    justify-content: flex-end;
`;

const Panel = styled.form`
    width: 233px;
    padding: 3px 5px 0 4px;
    background: #dcfafa;
    color: #000;
    font-family: ${panelFont};
    font-size: 12px;
    line-height: 14px;
`;

const sunken = css`
    border: 2px solid;
    border-color: #707070 #f4f4f4 #f4f4f4 #707070;
`;

const SelectBox = styled.span`
    position: relative;
    display: block;
    flex: ${p => (p.$fixed ? 'none' : 1)};
    width: ${p => (p.$fixed ? `${p.$fixed}px` : 'auto')};
    height: 22px;
    background: ${p => (p.$off ? 'transparent' : '#fff')};
    ${sunken}
`;

const NativeSelect = styled.select`
    appearance: none;
    width: 100%;
    height: 18px;
    padding: 0 16px 0 2px;
    border: 0;
    background: transparent;
`;

const DropArrow = styled.span`
    position: absolute;
    top: 0;
    right: 0;
    width: 16px;
    height: 18px;
    padding: 7px 3px;
    border: 1px solid;
    border-color: #fff #707070 #707070 #fff;
    background: #f0f0f0;
    pointer-events: none;
    &::after {
        content: '';
        display: block;
        border: 4px solid transparent;
        border-bottom: 0;
        border-top-color: ${p => (p.$off ? '#a0a0a0' : '#000')};
    }
`;

const StatusField = styled.input`
    display: block;
    width: ${p => (p.$fixed ? `${p.$fixed}px` : '100%')};
    height: ${p => (p.$tall ? 25 : 18)}px;
    padding: 0 0 0 1px;
    background: ${p => (p.$tint || '#fff')};
    ${sunken}
    border-width: 1px;
    ${p => p.$muted && css`color: #808080;`}
`;

const PanelTabs = styled.div`
    display: flex;
    align-items: flex-end;
    gap: 2px;
    height: 22px;
    margin-top: 5px;
    background: #f0f0f0;
`;

const PanelTab = styled.button`
    height: ${p => (p.$on ? 22 : 20)}px;
    padding: 0 4px;
    border: solid;
    border-width: 1px 2px 0 1px;
    border-color: #fff #707070 #fff #fff;
    background: #f0f0f0;
    ${p => p.$on && css`padding: 0 7px;`}
`;

const PanelBody = styled.div`
    padding: 6px 4px 6px 5px;
    border: solid;
    border-width: 2px 2px 2px 4px;
    border-color: #f0f0f0 #707070 #707070 #f0f0f0;
`;

const Positions = styled.div`
    display: grid;
    grid-template-columns: 116px 39px 39px;
    justify-content: space-between;
    padding: 2px 3px 0 3px;
`;

const Stack = styled.div`
    display: flex;
    flex-direction: column;
    gap: ${p => p.$gap}px;
    padding-top: ${p => p.$top || 0}px;
`;

const raised = css`
    padding: 0;
    border: solid;
    border-width: 1px 2px 2px 1px;
    border-color: #fff #707070 #707070 #fff;
    text-align: center;
`;

const TradeButton = styled.button`
    ${raised}
    height: 38px;
    width: 39px;
    background: ${p => (p.$sell ? '#ff8080' : '#80ff80')};
    font-size: 11px;
    font-weight: 700;
    line-height: 14px;
    white-space: pre-line;
`;

const Row = styled.div`
    display: flex;
    align-items: center;
    justify-content: ${p => p.$align || 'flex-end'};
    gap: ${p => p.$gap || 0}px;
    margin-top: ${p => p.$top || 0}px;
`;

const ActionButton = styled.button`
    ${raised}
    flex: ${p => p.$grow || 1};
    height: 30px;
    background: ${p => p.$bg || '#ff8040'};
    font-size: 11px;
    font-weight: 700;
    & > mark { background: #ff8040; }
`;

const SizeButton = styled.button`
    ${raised}
    flex: 1;
    height: 26px;
    background: #f0f0f0;
    ${p => p.$on && css`border-color: #707070 #fff #fff #707070;`}
`;

const BreakEven = styled(SizeButton)`
    flex: none;
    width: 40px;
`;

const CheckLabel = styled.label`
    display: flex;
    align-items: center;
    gap: 6px;
    padding: 6px 0 0 6px;
`;

const Tick = styled.input`
    appearance: none;
    width: 12px;
    height: 12px;
    background: #fff;
    ${sunken}
    border-width: 1px;
`;

const OrderBox = styled.fieldset`
    min-width: 0;
    margin: 2px 0 0 0;
    padding: 5px 3px 1px 3px;
    border: 1px solid #808080;
`;

const FieldLabel = styled.label`
    flex: 1;
    text-align: right;
    white-space: nowrap;
`;

function Select({ id, value, label, off, fixed }) {
    return (
        <SelectBox $off={off} $fixed={fixed}>
            <NativeSelect id={id} aria-label={label} disabled={off}><option>{value}</option></NativeSelect>
            <DropArrow $off={off} />
        </SelectBox>
    );
}

const TradePanel = () => (
    <Panel onSubmit={e => e.preventDefault()}>
        <Select label="Order configuration" value="SimpleBracket" />
        <StatusField $fixed={215} $tint="#f0f0f0" aria-label="Status" readOnly value="" />
        <PanelTabs>
            <PanelTab $on>Main</PanelTab>
            <PanelTab>Targets</PanelTab>
            <PanelTab>Set</PanelTab>
            <PanelTab>C</PanelTab>
            <PanelTab>A</PanelTab>
        </PanelTabs>
        <PanelBody>
            <Positions>
                <Stack $gap={6} $top={5}>
                    <div>
                        <label htmlFor="pos">Pos Qty@Price:</label>
                        <StatusField id="pos" readOnly value="Flat" />
                    </div>
                    <StatusField aria-label="Profit and loss" readOnly value="P/L: 0.00C, 0.00p" />
                    <StatusField aria-label="Daily profit and loss" readOnly value="DPL: 0.00C, 0.00P" />
                    <Select label="Account" value="Sim1" fixed={116} />
                </Stack>
                <Stack $gap={1}>
                    {['MKT', 'ASK', 'BID'].map(t => <TradeButton key={t}>{`BUY\n${t}`}</TradeButton>)}
                </Stack>
                <Stack $gap={1}>
                    {['MKT', 'ASK', 'BID'].map(t => <TradeButton key={t} $sell>{`SELL\n${t}`}</TradeButton>)}
                </Stack>
            </Positions>
            <Row $top={6} $gap={1}>
                <ActionButton $grow={65}><u>F</u>latten</ActionButton>
                <ActionButton $grow={67}><u>R</u>everse</ActionButton>
                <ActionButton $grow={59} $bg="#909090"><mark>Cancel<u>A</u>ll</mark></ActionButton>
                <ActionButton $grow={19} $bg="#f0f0f0">M</ActionButton>
            </Row>
            <Row $top={8}>
                {[1, 2, 3, 4, 5, 6].map(n => <SizeButton key={n} $on={n === 1}>{n}</SizeButton>)}
            </Row>
            <Row $top={4} $align="space-between">
                <CheckLabel><Tick type="checkbox" />Use Attached Orders</CheckLabel>
                <BreakEven>BE</BreakEven>
            </Row>
            <OrderBox>
                <Row><Select label="Order type" value="Market" /></Row>
                <Row $top={4}><Select label="Limit price" value="" off fixed={122} /></Row>
                <Row $top={4}><Select label="Stop price" value="" off fixed={122} /></Row>
                <Row $top={2} $gap={4}>
                    <FieldLabel htmlFor="qty"><u>Q</u>uantity:</FieldLabel>
                    <Select id="qty" value="1" fixed={122} />
                </Row>
                <Row $top={4} $gap={4}>
                    <FieldLabel htmlFor="tif">TimeInForce:</FieldLabel>
                    <Select id="tif" value="Good till Canceled" fixed={122} />
                </Row>
                <Row $top={2}><StatusField $tall $muted $tint="transparent" aria-label="Time" readOnly value="00:00:00" /></Row>
                <Row $top={3} $gap={47} $align="center">
                    <TradeButton>BUY</TradeButton>
                    <TradeButton $sell>SELL</TradeButton>
                </Row>
            </OrderBox>
        </PanelBody>
    </Panel>
);

const Globe = () => (
    <svg width="15" height="15" viewBox="0 0 15 15">
        <circle cx="7.5" cy="7.5" r="7" fill="#3c8fc8" stroke="#3a5a70" />
        <path d="M3 3C6 1 9 2 9 4C8 6 6 6 5 10C2 8 1 5 3 3Z" fill="#c8e88a" />
        <path d="M9 5C11 3 13 5 13 8C12 12 9 14 7 12C8 9 8 7 9 5Z" fill="#8cc850" />
    </svg>
);

export default function App() {
    return (
        <>
            <GlobalStyle />
            <Desktop>
                <Wallpaper />
                <Application>
                    <AppTitle>
                        <Globe />
                        <AppName>Sierra Chart 2320 NQ  Rithmic Direct - DTC 2021-11-02  06:09:17 Tue [Sim]  DF:101752  ST:11, 11</AppName>
                        <AppControls>
                            <PlainButton aria-label="Minimize"><svg width="20" height="12" stroke="#000"><path d="M5 6.5H15" /></svg></PlainButton>
                            <PlainButton aria-label="Restore"><svg width="20" height="12" fill="none" stroke="#000"><path d="M5.5 3.5H12.5V10.5H5.5ZM7.5 3V1.5H14.5V8.5H13" /></svg></PlainButton>
                            <PlainButton aria-label="Close"><svg width="20" height="12" stroke="#000"><path d="M5 1L15 11M15 1L5 11" /></svg></PlainButton>
                        </AppControls>
                    </AppTitle>
                    <MenuBar>
                        {menus.map(m => <PlainButton key={m}>{m}</PlainButton>)}
                    </MenuBar>
                    <Toolbar>
                        <Connection>DF:101752  ST:11, 11  BR:4.07M  DL:0</Connection>
                        {tools.map((group, i) => (
                            <ToolGroup key={i}>
                                {group.map(([name, w, off]) => <ToolButton key={name} $w={w} disabled={off}>{name}</ToolButton>)}
                            </ToolGroup>
                        ))}
                    </Toolbar>
                    <TabStrip>
                        {symbolTabs.map(([name, w]) => <StripTab key={name} $w={w} $on={name === 'NQ'}>{name}</StripTab>)}
                    </TabStrip>
                    <Workspace>
                        <Column $rows="minmax(0, 423fr) minmax(0, 424fr) minmax(0, 423fr)">
                            <ChildWindow title="YEAR NQZ1.CME/MNQZ1.CME [CBV]  Daily  #3 L:1 | Micro E-Mini NASDAQ 100 - CME (Dec21)"><YearChart /></ChildWindow>
                            <ChildWindow title="QUARTER NQZ1.CME [CBV]  240 Min   #4 L:1 | E-Mini NASDAQ 100 - CME (Dec21)"><QuarterChart /></ChildWindow>
                            <ChildWindow title="MONTH NQZ1.CME [CBV]  120 Min   #5 L:1 | E-Mini NASDAQ 100 - CME (Dec21)"><MonthChart /></ChildWindow>
                        </Column>
                        <Column $rows="minmax(0, 637fr) minmax(0, 633fr)">
                            <ChildWindow active title="WEEKLY NQZ1.CME [CBV]  30 Min   #6 L:1 | E-Mini NASDAQ 100 - CME (Dec21)"><WeeklyChart /></ChildWindow>
                            <Split>
                                <ChildWindow place="short" title="COMPOSITE NQZ1.CME [CBV]  #1 L:1 | E-Mini NASDAQ 100 - CME (Dec21)">
                                    <TradeView />
                                    <Scrollbar thumb="start" />
                                </ChildWindow>
                                <ChildWindow place="under" title="TPO NQZ1.CME [CBV]  #2 L:1 | E-Mini NASDAQ 100 - CME (Dec21)"><TpoChart /></ChildWindow>
                            </Split>
                        </Column>
                        <Column $rows="minmax(0, 636fr) minmax(0, 634fr)">
                            <ChildWindow title="RTH NQZ1.CME/MNQZ1.CME [CBV]  500 Volume  #8 L:1 | E-Mini NASDAQ 100 - CME (Dec21)">
                                <TradeView><TradePanel /></TradeView>
                                <Scrollbar thumb="start" />
                            </ChildWindow>
                            <ChildWindow place="inset" title="ETH NQZ1.CME/MNQZ1.CME [CBV]  3 Min   #7 L:1 | E-Mini NASDAQ 100 - CME (Dec21)"><EthChart /></ChildWindow>
                        </Column>
                    </Workspace>
                    <TabStrip>
                        {chartTabs.map(([name, w]) => <StripTab key={name} $w={w} $on={name === 'WEEKLY'}>{name}</StripTab>)}
                    </TabStrip>
                </Application>
                <SideApp />
                <Taskbar><span>ENG</span><span>6:09 AM</span></Taskbar>
            </Desktop>
            <StatusTip>www.sierrachart.com</StatusTip>
        </>
    );
}
